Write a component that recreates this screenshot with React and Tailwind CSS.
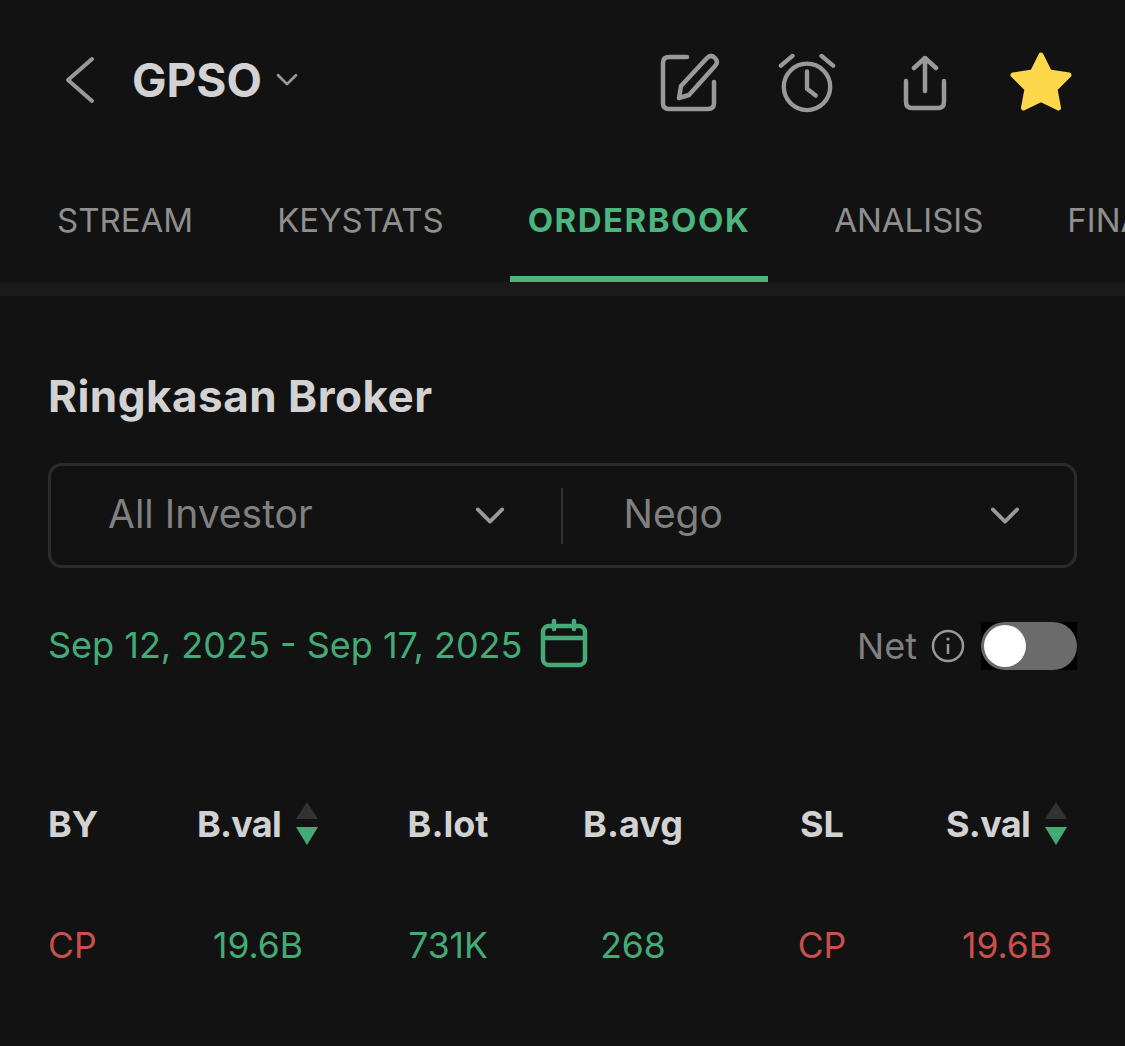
import React from "react";

const tabs = ["STREAM", "KEYSTATS", "ORDERBOOK", "ANALISIS", "FINANSIAL"];

function Chevron({ className }) {
  return (
    <svg className={className} viewBox="0 0 32 20" fill="none" stroke="currentColor" strokeWidth="4" strokeLinecap="round" strokeLinejoin="round">
      <path d="M3 3 L16 16 L29 3" />
    </svg>
  );
}

function SortArrows() {
  return (
    <svg className="w-[24px] h-[46px] shrink-0" viewBox="0 0 24 46">
      <path d="M12 1 L23 18 H1 Z" fill="#333333" />
      <path d="M1 26 H23 L12 44 Z" fill="#44ab76" />
    </svg>
  );
}

export default function App() {
  return (
    <div className="w-[1125px] h-[1046px] overflow-hidden bg-[#121212] font-['Inter',sans-serif]">
      {/* header */}
      <div className="flex items-center h-[160px] pl-[65px] pr-[52px]">
        <svg className="w-[30px] h-[50px] text-[#999999]" viewBox="0 0 30 50" fill="none" stroke="currentColor" strokeWidth="4" strokeLinecap="round" strokeLinejoin="round">
          <path d="M27 4 L3 25 L27 46" />
        </svg>
        <div className="ml-[37px] text-[46px] font-bold text-[#d2d2d2] leading-none">GPSO</div>
        <Chevron className="ml-[14px] w-[22px] h-[14px] text-[#999999]" />
        <div className="ml-auto mt-[5px] flex items-center">
          <svg className="w-[60px] h-[60px] text-[#999999]" viewBox="0 0 60 60" fill="none" stroke="currentColor" strokeWidth="4.5" strokeLinecap="round" strokeLinejoin="round">
            <path d="M27 4 H9 Q3 4 3 10 V50 Q3 56 9 56 H48 Q54 56 54 50 V29" />
            <path d="M19 45 L21 33 L47 5 Q51 1 55 5 Q59 9 55 13 L29 42 Z" />
          </svg>
          <svg className="ml-[58px] w-[58px] h-[62px] text-[#999999]" viewBox="0 0 60 62" fill="none" stroke="currentColor" strokeWidth="4.5" strokeLinecap="round" strokeLinejoin="round">
            <circle cx="30" cy="35" r="24" />
            <path d="M30 19 V37 L39 44" />
            <path d="M3 13 L15 3 M45 3 L57 13" />
          </svg>
          <svg className="ml-[66px] w-[46px] h-[56px] text-[#999999]" viewBox="0 0 46 56" fill="none" stroke="currentColor" strokeWidth="4.5" strokeLinecap="round" strokeLinejoin="round">
            <path d="M4 26 V47 Q4 53 10 53 H36 Q42 53 42 47 V26" />
            <path d="M23 36 V3 M12 13 L23 3 L34 13" />
          </svg>
          <svg className="ml-[61px] mb-[2px] w-[64px] h-[62px]" viewBox="0 0 64 62" fill="#fdd84a" stroke="#fdd84a" strokeWidth="5" strokeLinejoin="round">
            <path d="M32 4 L40.5 21 L60 24 L46 38 L49.5 57 L32 48.5 L14.5 57 L18 38 L4 24 L23.5 21 Z" />
          </svg>
        </div>
      </div>

      {/* tabs */}
      <div className="flex h-[122px] pl-[15px] whitespace-nowrap">
        {tabs.map((t, i) => (
          <div
            key={t}
            className={
              i === 2
                ? "flex items-center h-full pt-[6px] px-[18px] mx-[24px] border-b-[6px] border-[#4cb47e] text-[33px] font-bold text-[#4cb47e] tracking-[1.5px]"
                : "flex items-center h-full pt-[6px] px-[18px] mx-[24px] border-b-[6px] border-transparent text-[33px] text-[#8f8f8f]"
            }
          >
            {t}
          </div>
        ))}
      </div>
      <div className="h-[14px] bg-[#1a1a1a]" />

      <div className="px-[48px]">
        <div className="mt-[72px] text-[44px] font-bold text-[#d2d2d2] leading-[56px] tracking-[0.5px]">Ringkasan Broker</div>

        {/* filters */}
        <div className="mt-[39px] flex items-center h-[105px] border-[3px] border-[#2b2b2b] rounded-[14px]">
          <div className="flex items-center flex-1 pl-[57px] pr-[56px]">
            <span className="text-[39px] text-[#808080] mb-[2px]">All Investor</span>
            <Chevron className="ml-auto w-[30px] h-[20px] text-[#999999]" />
          </div>
          <div className="w-[2px] h-[56px] bg-[#333333]" />
          <div className="flex items-center flex-1 pl-[61px] pr-[54px]">
            <span className="text-[39px] text-[#808080] mb-[2px]">Nego</span>
            <Chevron className="ml-auto w-[30px] h-[20px] text-[#999999]" />
          </div>
        </div>

        {/* date range */}
        <div className="mt-[50px] flex items-center h-[56px]">
          <span className="text-[36px] text-[#44ab76] mb-[2px]">Sep 12, 2025 - Sep 17, 2025</span>
          <svg className="ml-[18px] mb-[6px] w-[48px] h-[50px] text-[#44ab76]" viewBox="0 0 48 50" fill="none" stroke="currentColor" strokeWidth="4.5" strokeLinecap="round" strokeLinejoin="round">
            <rect x="3" y="8" width="42" height="39" rx="6" />
            <path d="M3 20 H45 M14 3 V11 M34 3 V11" />
          </svg>
          <span className="ml-auto text-[36px] text-[#808080]">Net</span>
          <svg className="ml-[14px] w-[34px] h-[34px] text-[#999999]" viewBox="0 0 34 34" fill="none" stroke="currentColor">
            <circle cx="17" cy="17" r="15" strokeWidth="2.5" />
            <path d="M17 15 V25" strokeWidth="2.5" />
            <circle cx="17" cy="10" r="1.6" fill="currentColor" stroke="none" />
          </svg>
          <div className="ml-[16px] w-[96px] h-[48px] bg-black">
            <div className="flex items-center h-full rounded-full bg-[#6b6b6b] pl-[3px]">
              <div className="w-[42px] h-[42px] rounded-full bg-white" />
            </div>
          </div>
        </div>

        {/* table */}
        <div className="mt-[123px] grid grid-cols-[117px_186px_194px_176px_202px_168px] items-center text-[36px] font-bold text-[#d2d2d2] h-[46px]">
          <div>BY</div>
          <div className="flex items-center justify-center gap-[14px]">
            <span className="tracking-[-0.7px]">B.val</span>
            <SortArrows />
          </div>
          <div className="text-center">B.lot</div>
          <div className="text-center">B.avg</div>
          <div className="text-center">SL</div>
          <div className="flex items-center justify-center gap-[14px]">
            <span className="tracking-[-0.7px]">S.val</span>
            <SortArrows />
          </div>
        </div>
        <div className="mt-[76px] grid grid-cols-[117px_186px_194px_176px_202px_168px] items-center text-[35.5px] h-[46px]">
          <div className="text-[#c9504c]">CP</div>
          <div className="text-center text-[#44ab76]">19.6B</div>
          <div className="text-center text-[#44ab76]">731K</div>
          <div className="text-center text-[#44ab76]">268</div>
          <div className="text-center text-[#c9504c]">CP</div>
          <div className="text-center text-[#c9504c]">19.6B</div>
        </div>
      </div>
    </div>
  );
}
